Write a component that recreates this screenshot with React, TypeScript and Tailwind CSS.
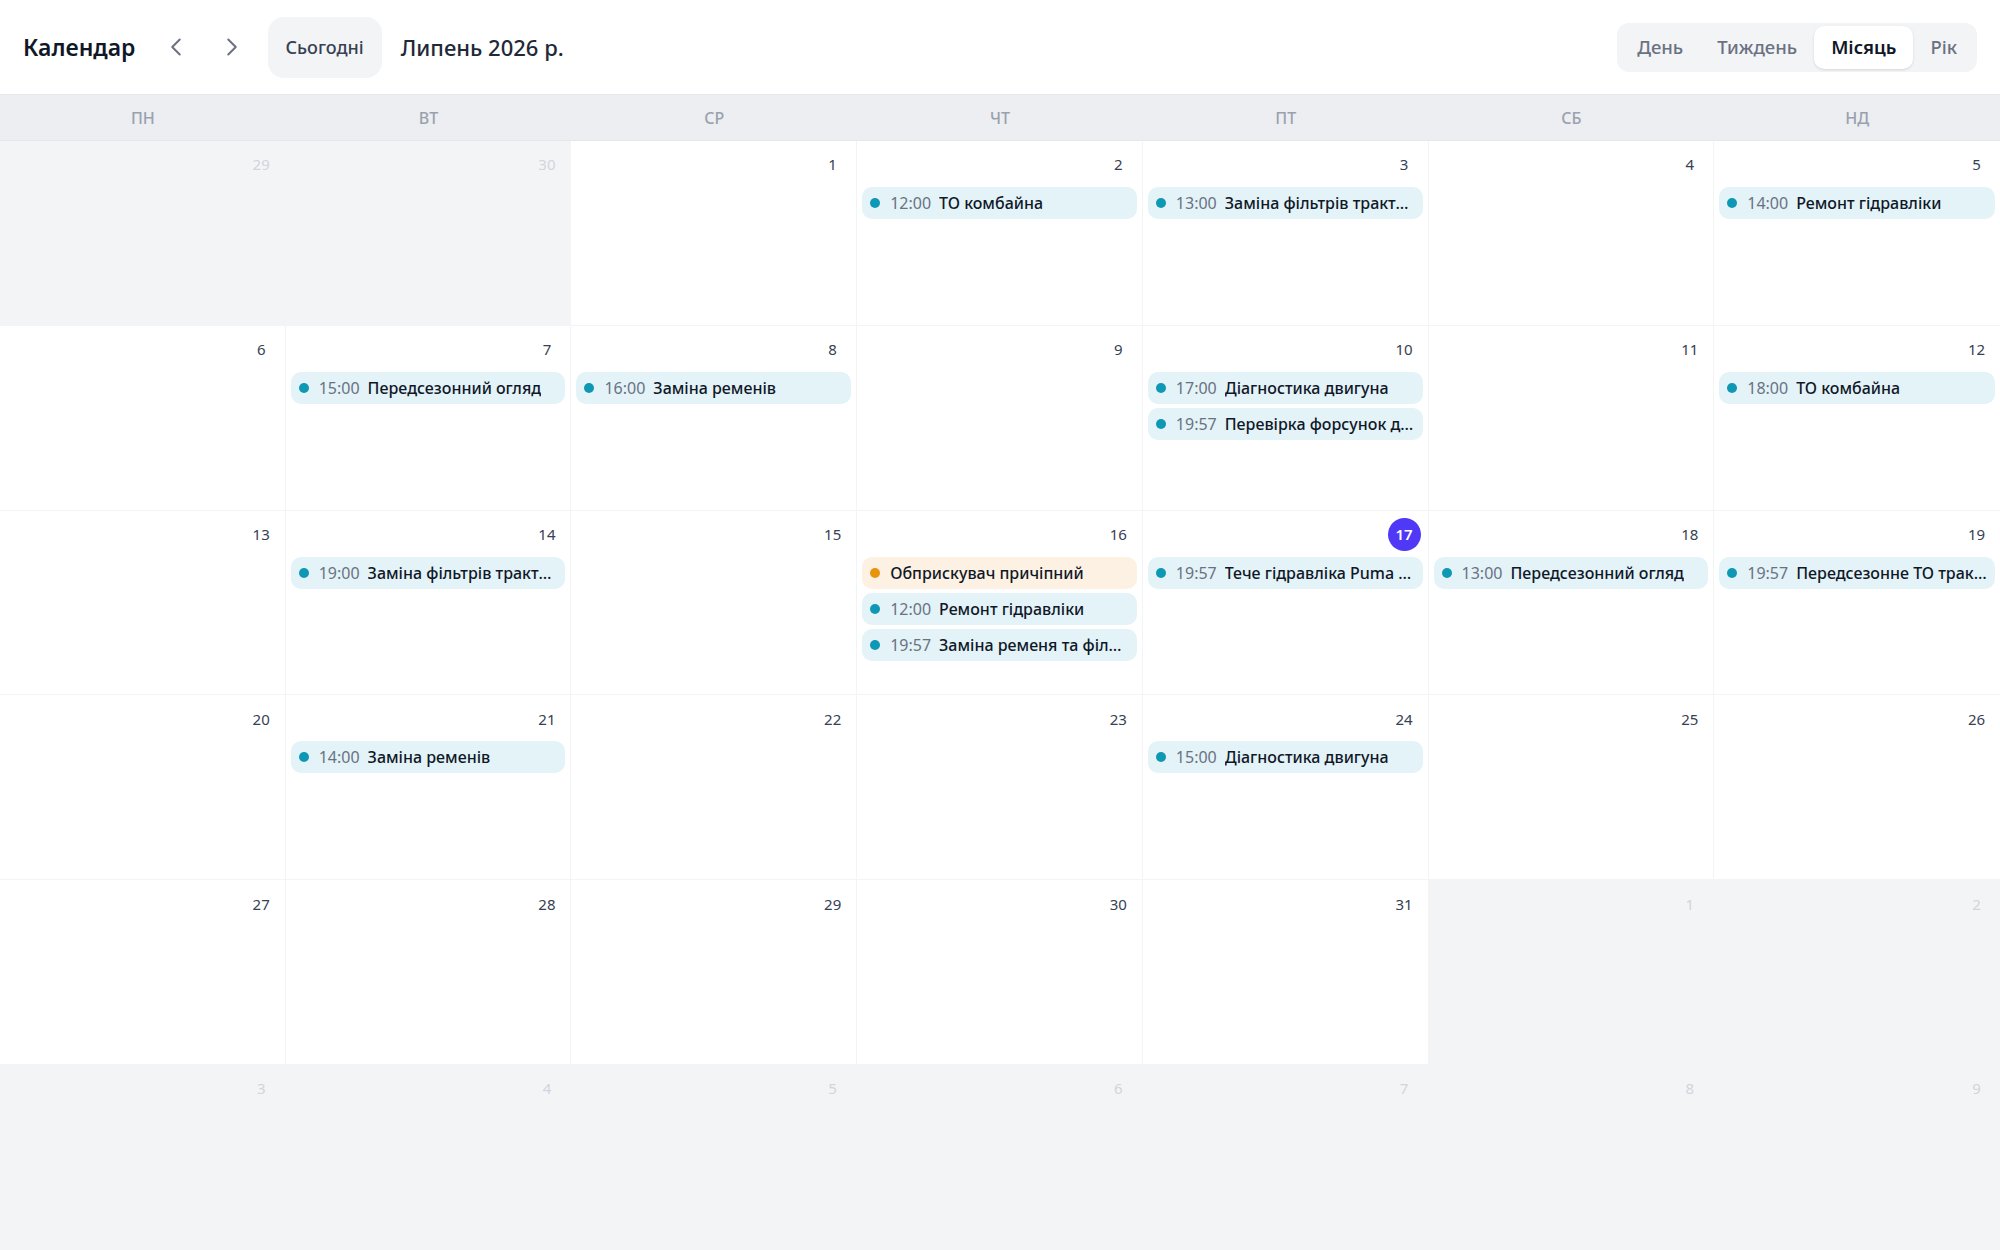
import { ChevronLeft, ChevronRight } from 'lucide-react'

type Ev = { time?: string; title: string; tone?: 'cyan' | 'orange' }
type Day = { d: number; out?: boolean; today?: boolean; events?: Ev[] }

const weeks: Day[][] = [
  [
    { d: 29, out: true },
    { d: 30, out: true },
    { d: 1 },
    { d: 2, events: [{ time: '12:00', title: 'ТО комбайна' }] },
    { d: 3, events: [{ time: '13:00', title: 'Заміна фільтрів трактора' }] },
    { d: 4 },
    { d: 5, events: [{ time: '14:00', title: 'Ремонт гідравліки' }] },
  ],
  [
    { d: 6 },
    { d: 7, events: [{ time: '15:00', title: 'Передсезонний огляд' }] },
    { d: 8, events: [{ time: '16:00', title: 'Заміна ременів' }] },
    { d: 9 },
    {
      d: 10,
      events: [
        { time: '17:00', title: 'Діагностика двигуна' },
        { time: '19:57', title: 'Перевірка форсунок двигуна' },
      ],
    },
    { d: 11 },
    { d: 12, events: [{ time: '18:00', title: 'ТО комбайна' }] },
  ],
  [
    { d: 13 },
    { d: 14, events: [{ time: '19:00', title: 'Заміна фільтрів трактора' }] },
    { d: 15 },
    {
      d: 16,
      events: [
        { title: 'Обприскувач причіпний', tone: 'orange' },
        { time: '12:00', title: 'Ремонт гідравліки' },
        { time: '19:57', title: 'Заміна ременя та фільтрів' },
      ],
    },
    { d: 17, today: true, events: [{ time: '19:57', title: 'Тече гідравліка Puma 165' }] },
    { d: 18, events: [{ time: '13:00', title: 'Передсезонний огляд' }] },
    { d: 19, events: [{ time: '19:57', title: 'Передсезонне ТО трактора' }] },
  ],
  [
    { d: 20 },
    { d: 21, events: [{ time: '14:00', title: 'Заміна ременів' }] },
    { d: 22 },
    { d: 23 },
    { d: 24, events: [{ time: '15:00', title: 'Діагностика двигуна' }] },
    { d: 25 },
    { d: 26 },
  ],
  [
    { d: 27 },
    { d: 28 },
    { d: 29 },
    { d: 30 },
    { d: 31 },
    { d: 1, out: true },
    { d: 2, out: true },
  ],
  [3, 4, 5, 6, 7, 8, 9].map((d) => ({ d, out: true })),
]

const weekdays = ['ПН', 'ВТ', 'СР', 'ЧТ', 'ПТ', 'СБ', 'НД']

function EventChip({ ev }: { ev: Ev }) {
  const orange = ev.tone === 'orange'
  return (
    <div
      className={`flex h-8 items-center gap-2 rounded-[10px] pl-2 pr-2 text-base ${
        orange ? 'bg-[#fdf1e3]' : 'bg-[#e3f3f8]'
      }`}
    >
      <span className={`mr-0.5 h-2.5 w-2.5 shrink-0 rounded-full ${orange ? 'bg-[#e8930c]' : 'bg-[#0f98b4]'}`} />
      {ev.time && <span className="shrink-0 text-gray-500">{ev.time}</span>}
      <span className="truncate font-medium text-gray-900">{ev.title}</span>
    </div>
  )
}

function Cell({ day, last }: { day: Day; last: boolean }) {
  return (
    <div
      className={`flex min-w-0 flex-col border-b border-gray-100 px-[5px] pt-[7px] ${last ? '' : 'border-r'} ${
        day.out ? 'bg-gray-100' : 'bg-white'
      }`}
    >
      <div className="flex justify-end">
        <span
          className={`mr-0.5 flex h-[33px] w-[33px] items-center justify-center rounded-full text-[15px] ${
            day.today ? 'bg-indigo-600 font-semibold text-white' : day.out ? 'text-gray-300' : 'text-gray-700'
          }`}
        >
          {day.d}
        </span>
      </div>
      {day.events && (
        <div className="mt-1.5 flex flex-col gap-1">
          {day.events.map((ev, i) => (
            <EventChip key={i} ev={ev} />
          ))}
        </div>
      )}
    </div>
  )
}

export default function App() {
  return (
    <div className="flex h-screen flex-col overflow-hidden bg-white font-['Noto_Sans','Open_Sans',sans-serif]">
      <header className="flex h-[95px] shrink-0 items-center justify-between border-b border-gray-200 px-[23px]">
        <div className="flex items-center">
          <h1 className="text-[23px] font-semibold text-gray-900">Календар</h1>
          <button className="ml-[20px] flex h-10 w-10 items-center justify-center text-gray-500">
            <ChevronLeft size={30} strokeWidth={1.6} />
          </button>
          <button className="ml-4 flex h-10 w-10 items-center justify-center text-gray-500">
            <ChevronRight size={30} strokeWidth={1.6} />
          </button>
          <button className="ml-4 h-[61px] rounded-2xl bg-gray-100 px-[18px] text-[18px] font-medium text-gray-700">
            Сьогодні
          </button>
          <span className="ml-[19px] text-[22px] font-medium text-gray-800">Липень 2026 р.</span>
        </div>
        <div className="flex rounded-xl bg-gray-100 p-[3px]">
          {['День', 'Тиждень', 'Місяць', 'Рік'].map((v) => (
            <button
              key={v}
              className={`h-[43px] rounded-[10px] px-[17px] text-[18.5px] ${
                v === 'Місяць' ? 'bg-white font-semibold text-gray-900 shadow-sm' : 'font-medium text-gray-500'
              }`}
            >
              {v}
            </button>
          ))}
        </div>
      </header>
      <div className="grid h-[46px] shrink-0 grid-cols-7 border-b border-gray-200 bg-[#eceef1]">
        {weekdays.map((w) => (
          <div key={w} className="flex items-center justify-center text-base font-medium text-gray-400">
            {w}
          </div>
        ))}
      </div>
      <div className="grid flex-1 grid-cols-7 grid-rows-6">
        {weeks.map((week, wi) => week.map((day, di) => <Cell key={`${wi}-${di}`} day={day} last={di === 6} />))}
      </div>
    </div>
  )
}
